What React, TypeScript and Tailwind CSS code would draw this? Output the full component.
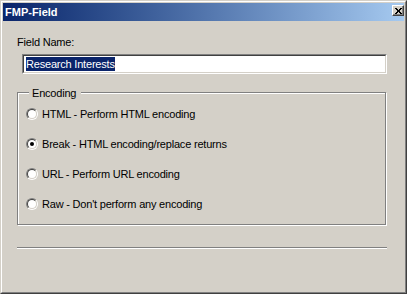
const OPTIONS = [
  { label: "HTML - Perform HTML encoding", checked: false },
  { label: "Break - HTML encoding/replace returns", checked: true },
  { label: "URL - Perform URL encoding", checked: false },
  { label: "Raw - Don't perform any encoding", checked: false },
];

function Radio({ checked }: { checked: boolean }) {
  return (
    <span className="flex h-[12px] w-[12px] shrink-0 rounded-full border border-t-[#808080] border-l-[#808080] border-r-white border-b-white">
      <span className="flex flex-1 items-center justify-center rounded-full border border-t-[#404040] border-l-[#404040] border-r-[#d4d0c8] border-b-[#d4d0c8] bg-white">
        {checked && <span className="h-[4px] w-[4px] rounded-full bg-black" />}
      </span>
    </span>
  );
}

export default function App() {
  return (
    <div className="h-[294px] w-[407px] border border-t-[#d4d0c8] border-l-[#d4d0c8] border-r-[#404040] border-b-[#404040] bg-[#d4d0c8] font-['Liberation_Sans',Arial,sans-serif] text-[11px] leading-[13px] text-black">
      <div className="flex h-full flex-col border border-t-white border-l-white border-r-[#808080] border-b-[#808080] p-px">
        {/* caption */}
        <div className="flex h-[18px] shrink-0 items-center justify-between bg-gradient-to-r from-[#0a246a] to-[#a6caf0] pl-[2px]">
          <span className="font-bold text-white">FMP-Field</span>
          <span className="flex h-[11px] w-[12px] items-center justify-center self-start mt-[2px] border border-t-white border-l-white border-r-[#404040] border-b-[#404040] bg-[#d4d0c8] shadow-[inset_-1px_-1px_0_#808080]">
            <svg width="7" height="6" viewBox="0 0 7 6" shapeRendering="crispEdges">
              <path d="M0 0h2v1h-2z M5 0h2v1h-2z M1 1h2v1h-2z M4 1h2v1h-2z M2 2h3v2h-3z M1 4h2v1h-2z M4 4h2v1h-2z M0 5h2v1h-2z M5 5h2v1h-2z" fill="#000" />
            </svg>
          </span>
        </div>

        {/* body */}
        <div className="flex flex-col pl-[14px] pt-[15px] tracking-[-0.2px]">
          <span>Field Name:</span>
          <div className="ml-[5px] mt-[5px] h-[20px] w-[365px] border border-t-[#808080] border-l-[#808080] border-r-white border-b-white">
            <div className="h-full border border-t-[#404040] border-l-[#404040] border-r-[#d4d0c8] border-b-[#d4d0c8] bg-white pl-[2px] pt-px">
              <span className="inline-block h-[14px] bg-[#0a246a] leading-[14px] text-white">Research Interests</span>
            </div>
          </div>

          <div className="relative mt-[18px] h-[133px] w-[369px] border border-[#808080] pl-[8px] pt-[6px] shadow-[inset_1px_1px_0_#fff,1px_1px_0_#fff]">
            <span className="absolute left-[11px] top-[-6px] bg-[#d4d0c8] pl-[3px] pr-[5px]">Encoding</span>
            {OPTIONS.map((o, i) => (
              <div key={i} className="flex h-[30px] items-center gap-[4px]">
                <Radio checked={o.checked} />
                <span>{o.label}</span>
              </div>
            ))}
          </div>

          <div className="mt-[22px] h-[2px] w-[370px] border-t border-b border-t-[#808080] border-b-white" />
        </div>
      </div>
    </div>
  );
}
